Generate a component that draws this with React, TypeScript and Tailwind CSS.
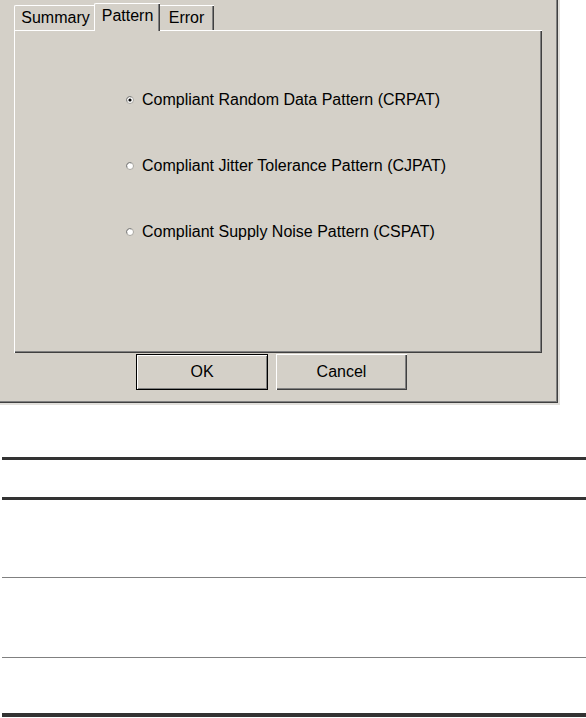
import React, { useState } from 'react';

const patterns = [
  { id: 'crpat', label: 'Compliant Random Data Pattern (CRPAT)' },
  { id: 'cjpat', label: 'Compliant Jitter Tolerance Pattern (CJPAT)' },
  { id: 'cspat', label: 'Compliant Supply Noise Pattern (CSPAT)' },
];

const Radio: React.FC<{ checked: boolean }> = ({ checked }) => (
  <svg width="8" height="8" viewBox="0 0 8 8" className="shrink-0">
    <circle cx="4" cy="4" r="3.5" fill="#ffffff" stroke="#a8a6a0" strokeWidth="1" />
    <path d="M1 5.5 A3.3 3.3 0 0 1 5.5 1" fill="none" stroke="#808080" strokeWidth="1" />
    {checked && <circle cx="4" cy="4" r="1.6" fill="#000000" />}
  </svg>
);

const App: React.FC = () => {
  const [selected, setSelected] = useState('crpat');
  const [tab, setTab] = useState('pattern');

  const tabs = [
    { id: 'summary', name: 'Summary', w: 'w-[82px]' },
    { id: 'pattern', name: 'Pattern', w: 'w-[62px]' },
    { id: 'error', name: 'Error', w: 'w-[56px]' },
  ];

  return (
    <div className="w-[586px] h-[718px] bg-white overflow-hidden font-['Liberation_Sans',Arial,sans-serif] text-[16px] leading-[16px] text-black">
      {/* Dialog with light outer strip */}
      <div className="w-[560px] h-[405px] bg-[#e2e0dc] pr-[2px] pb-[2px]">
        <div className="w-[558px] h-[403px] bg-[#d4d0c8] shadow-[inset_-1px_-1px_#404040,inset_-2px_-2px_#808080] pt-[3px] pl-[14px]">
          {/* Tabs */}
          <div className="relative z-10 flex items-end h-[27px]">
            {tabs.map((t) => {
              const active = t.id === tab;
              return (
                <button
                  key={t.id}
                  onClick={() => setTab(t.id)}
                  className={
                    active
                      ? `${t.w} -mx-[2px] w-[66px] h-[28px] -mb-px bg-[#d4d0c8] border-t border-l border-white rounded-tl-[2px] shadow-[inset_-1px_0_#404040,inset_-2px_0_#808080] pt-[4px] flex justify-center items-start relative z-10`
                      : `${t.w} h-[25px] bg-[#d4d0c8] border-t border-l border-white rounded-tl-[2px] shadow-[inset_-1px_0_#404040,inset_-2px_0_#808080] pt-[4px] flex justify-center items-start`
                  }
                >
                  {t.name}
                </button>
              );
            })}
          </div>

          {/* Panel */}
          <div className="w-[528px] h-[323px] border-t border-l border-white shadow-[inset_-1px_-1px_#404040,inset_-2px_-2px_#808080] pt-[61px] pl-[111px] flex flex-col gap-[50px]">
            {patterns.map((p) => (
              <label
                key={p.id}
                onClick={() => setSelected(p.id)}
                className="flex items-center gap-[8px] cursor-default"
              >
                <Radio checked={selected === p.id} />
                <span className="whitespace-nowrap">{p.label}</span>
              </label>
            ))}
          </div>

          {/* Buttons */}
          <div className="flex gap-[8px] mt-[1px] ml-[122px]">
            <button className="w-[132px] h-[36px] bg-[#d4d0c8] border border-black shadow-[inset_1px_1px_#ffffff,inset_-1px_-1px_#808080] flex items-center justify-center">
              OK
            </button>
            <button className="w-[131px] h-[36px] bg-[#d4d0c8] shadow-[inset_1px_1px_#ffffff,inset_-1px_-1px_#404040,inset_-2px_-2px_#808080] flex items-center justify-center">
              Cancel
            </button>
          </div>
        </div>
      </div>

      {/* Empty ruled table */}
      <div className="ml-[2px] mt-[52px] flex flex-col">
        <div className="h-[3px] bg-[#333333]" />
        <div className="h-[37px]" />
        <div className="h-[3px] bg-[#333333]" />
        <div className="h-[78px] border-b border-[#808080]" />
        <div className="h-[80px] border-b border-[#808080]" />
        <div className="h-[55px]" />
        <div className="h-[4px] bg-[#333333]" />
      </div>
    </div>
  );
};

export default App;
